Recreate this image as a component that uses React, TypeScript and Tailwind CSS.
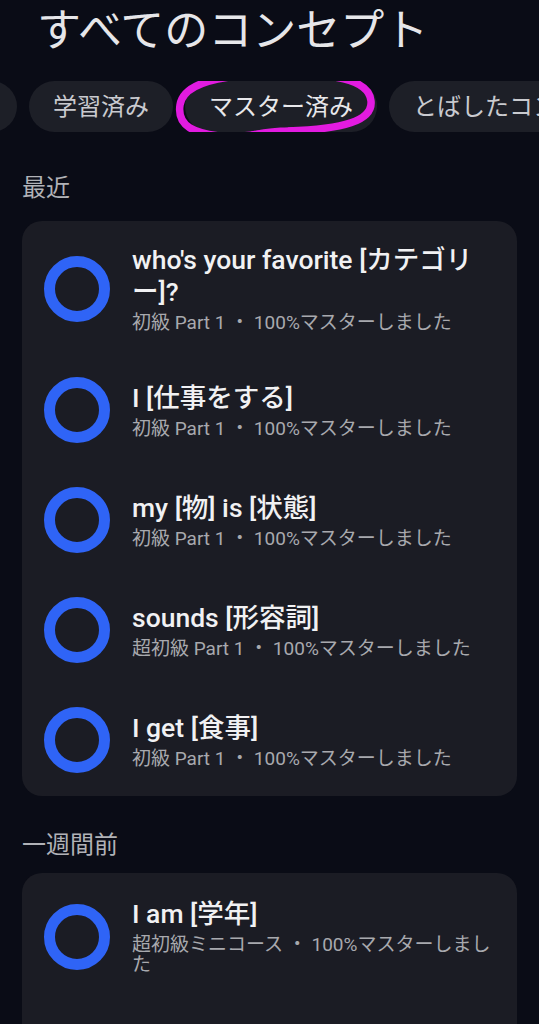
import React from "react";

type Item = { title: string; sub: string };

const recent: Item[] = [
  { title: "who's your favorite [カテゴリー]?", sub: "初級 Part 1 ・ 100%マスターしました" },
  { title: "I [仕事をする]", sub: "初級 Part 1 ・ 100%マスターしました" },
  { title: "my [物] is [状態]", sub: "初級 Part 1 ・ 100%マスターしました" },
  { title: "sounds [形容詞]", sub: "超初級 Part 1 ・ 100%マスターしました" },
  { title: "I get [食事]", sub: "初級 Part 1 ・ 100%マスターしました" },
];

const lastWeek: Item[] = [{ title: "I am [学年]", sub: "超初級ミニコース ・ 100%マスターしました" }];

const font = { fontFamily: "Roboto, 'Noto Sans CJK JP', sans-serif" };

function Row({ item }: { item: Item }) {
  return (
    <div className="flex items-center py-[22px] pl-[22px] pr-[22px]">
      <div className="h-[66px] w-[66px] shrink-0 rounded-full border-[11px] border-[#2f64f6]" />
      <div className="ml-[22px] min-w-0 flex-1">
        <p className="text-[26.5px] font-medium leading-[32px] text-[#f1f1f3]">{item.title}</p>
        <p className="mt-[5px] text-[19px] leading-[20px] text-[#a8a9ae]">{item.sub}</p>
      </div>
    </div>
  );
}

function Chip({ label, className = "" }: { label: string; className?: string }) {
  return (
    <div
      className={`flex h-[51px] shrink-0 items-center whitespace-nowrap rounded-full bg-[#1d1f27] px-[24px] text-[24px] text-[#c9cacf] ${className}`}
    >
      {label}
    </div>
  );
}

export default function App() {
  return (
    <div className="h-[1024px] w-[539px] overflow-hidden bg-[#0a0c16]" style={font}>
      <h1 className="pl-[37px] pt-[8px] text-[44px] font-normal leading-[46px] text-[#e6e6e9]">
        すべてのコンセプト
      </h1>

      {/* filter chips, row is scrolled so the first one is cut off */}
      <div className="relative mt-[27px] flex gap-[12px] overflow-hidden">
        <Chip label="学習中" className="-ml-[103px]" />
        <Chip label="学習済み" />
        <Chip label="マスター済み" className="text-[#e8e8eb]" />
        <Chip label="とばしたコンセプト" />
        <svg
          className="pointer-events-none absolute left-[171px] top-[-16px]"
          width="212"
          height="80"
          viewBox="0 0 212 80"
        >
          <path
            d="M62 72 C 20 70, 6 60, 9 40 C 12 20, 42 10, 102 9 C 162 8, 198 14, 200 36 C 202 56, 172 64, 117 66 C 102 66, 92 68, 82 70"
            fill="none"
            stroke="#e21be0"
            strokeWidth="7.5"
            strokeLinecap="round"
          />
          <path d="M64 72 L 124 66" fill="none" stroke="#e21be0" strokeWidth="8" strokeLinecap="round" />
        </svg>
      </div>

      <div className="px-[22px]">
        <p className="mt-[42px] text-[24px] leading-[28px] text-[#b1b2b7]">最近</p>
        <div className="mt-[19px] rounded-[20px] bg-[#1b1c24] py-[1px]">
          {recent.map((it, i) => (
            <Row key={i} item={it} />
          ))}
        </div>

        <p className="mt-[35px] text-[24px] leading-[28px] text-[#b1b2b7]">一週間前</p>
        <div className="mt-[14px] rounded-t-[20px] bg-[#1b1c24] pb-[60px] pt-[3px]">
          {lastWeek.map((it, i) => (
            <Row key={i} item={it} />
          ))}
        </div>
      </div>
    </div>
  );
}
